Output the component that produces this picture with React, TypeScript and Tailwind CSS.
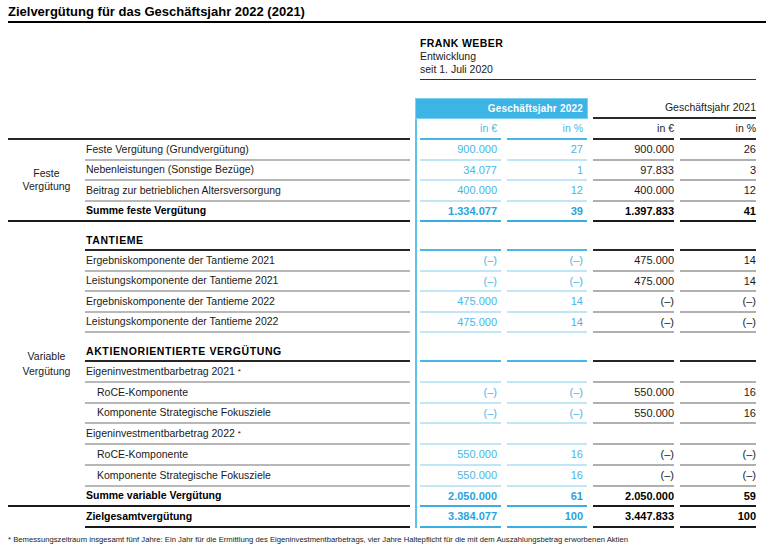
type Kind = "row" | "sub" | "sum" | "head" | "empty";

type Row = {
  label: string;
  kind: Kind;
  h: string;
  vals?: [string, string, string, string];
  star?: boolean;
};

const D = "(–)";

const rows: Row[] = [
  { label: "Feste Vergütung (Grundvergütung)", kind: "row", h: "h-[20.5px]", vals: ["900.000", "27", "900.000", "26"] },
  { label: "Nebenleistungen (Sonstige Bezüge)", kind: "row", h: "h-[20.5px]", vals: ["34.077", "1", "97.833", "3"] },
  { label: "Beitrag zur betrieblichen Altersversorgung", kind: "row", h: "h-[20.5px]", vals: ["400.000", "12", "400.000", "12"] },
  { label: "Summe feste Vergütung", kind: "sum", h: "h-[20.5px]", vals: ["1.334.077", "39", "1.397.833", "41"] },
  { label: "Tantieme", kind: "head", h: "h-[29px]" },
  { label: "Ergebniskomponente der Tantieme 2021", kind: "row", h: "h-[20.5px]", vals: [D, D, "475.000", "14"] },
  { label: "Leistungskomponente der Tantieme 2021", kind: "row", h: "h-[20.5px]", vals: [D, D, "475.000", "14"] },
  { label: "Ergebniskomponente der Tantieme 2022", kind: "row", h: "h-[20.5px]", vals: ["475.000", "14", D, D] },
  { label: "Leistungskomponente der Tantieme 2022", kind: "row", h: "h-[20.5px]", vals: ["475.000", "14", D, D] },
  { label: "Aktienorientierte Vergütung", kind: "head", h: "h-[29px]" },
  { label: "Eigeninvestmentbarbetrag 2021", kind: "empty", h: "h-[20.75px]", star: true },
  { label: "RoCE-Komponente", kind: "sub", h: "h-[20.75px]", vals: [D, D, "550.000", "16"] },
  { label: "Komponente Strategische Fokusziele", kind: "sub", h: "h-[20.75px]", vals: [D, D, "550.000", "16"] },
  { label: "Eigeninvestmentbarbetrag 2022", kind: "empty", h: "h-[20.75px]", star: true },
  { label: "RoCE-Komponente", kind: "sub", h: "h-[20.75px]", vals: ["550.000", "16", D, D] },
  { label: "Komponente Strategische Fokusziele", kind: "sub", h: "h-[20.75px]", vals: ["550.000", "16", D, D] },
  { label: "Summe variable Vergütung", kind: "sum", h: "h-[20.75px]", vals: ["2.050.000", "61", "2.050.000", "59"] },
  { label: "Zielgesamtvergütung", kind: "sum", h: "h-[20.75px]", vals: ["3.384.077", "100", "3.447.833", "100"] },
];

const leftLine: Record<Kind, string> = {
  row: "border-[#b8b8b8]",
  sub: "border-[#b8b8b8]",
  empty: "border-[#b8b8b8]",
  sum: "border-[#1a1a1a]",
  head: "border-[#262626]",
};

const boxLine: Record<Kind, string> = {
  row: "border-[#bfe5f6]",
  sub: "border-[#bfe5f6]",
  empty: "border-[#bfe5f6]",
  sum: "border-[#3aaee0]",
  head: "border-[#4ab6e6]",
};

const rightLine: Record<Kind, string> = {
  row: "border-[#afafaf]",
  sub: "border-[#afafaf]",
  empty: "border-[#afafaf]",
  sum: "border-[#1a1a1a]",
  head: "border-[#262626]",
};

function Label({ r }: { r: Row }) {
  let text = "text-[10.5px] text-[#1a1a1a]";
  if (r.kind === "sum") text = "text-[10.5px] font-bold text-black";
  if (r.kind === "head") text = "text-[10.5px] font-bold uppercase tracking-[0.6px] text-black";
  return (
    <div
      className={`${r.h} flex border-b-2 ${leftLine[r.kind]} ${r.kind === "head" ? "items-end pb-[2px]" : "items-center"} ${r.kind === "sub" ? "pl-[12px]" : "pl-[1px]"}`}
    >
      <span className={`${text} leading-[13px] whitespace-nowrap`}>
        {r.label}
        {r.star && <sup className="ml-[3px] text-[8px] relative -top-[1px]">*</sup>}
      </span>
    </div>
  );
}

function BoxRow({ r }: { r: Row }) {
  const text = r.kind === "sum" ? "font-bold text-[#28a4dc]" : "text-[#48b6e8]";
  return (
    <div className={`${r.h} flex gap-[6px] pl-[3px]`}>
      <div className={`w-[81px] flex items-center justify-end pr-[4px] border-b-2 ${boxLine[r.kind]} text-[11px] ${text}`}>
        {r.vals?.[0]}
      </div>
      <div className={`w-[80px] flex items-center justify-end pr-[4px] border-b-2 ${boxLine[r.kind]} text-[11px] ${text}`}>
        {r.vals?.[1]}
      </div>
    </div>
  );
}

function RightRow({ r }: { r: Row }) {
  const text = r.kind === "sum" ? "font-bold text-black" : "text-[#1a1a1a]";
  return (
    <div className={`${r.h} flex gap-[6px]`}>
      <div className={`w-[81px] flex items-center justify-end border-b-2 ${rightLine[r.kind]} text-[11px] ${text}`}>
        {r.vals?.[2]}
      </div>
      <div className={`w-[76px] flex items-center justify-end border-b-2 ${rightLine[r.kind]} text-[11px] ${text}`}>
        {r.vals?.[3]}
      </div>
    </div>
  );
}

export default function App() {
  const feste = rows.slice(0, 4);
  const variable = rows.slice(4, 17);
  const ziel = rows[17];

  return (
    <div className="w-[766px] h-[549px] bg-white overflow-hidden pl-2 font-['Liberation_Sans',Arial,sans-serif] text-[#1a1a1a]">
      <div className="h-[23px] border-b-2 border-black pt-[4px]">
        <h1 className="text-[13px] leading-[16px] font-bold text-black">
          Zielvergütung für das Geschäftsjahr 2022 (2021)
        </h1>
      </div>

      <div className="ml-[412px] w-[336px] mt-[14px] pb-[3px] border-b border-[#333] text-[10.5px] leading-[13px]">
        <div className="font-bold tracking-[0.4px] text-black">FRANK WEBER</div>
        <div>Entwicklung</div>
        <div>seit 1. Juli 2020</div>
      </div>

      <div className="mt-[18px] flex gap-[5px]">
        {/* labels */}
        <div className="w-[402px] flex flex-col">
          <div className="h-[42px] border-b-2 border-[#262626]" />
          <div className="flex">
            <div className="w-[77px] flex items-center justify-center border-b-2 border-[#1a1a1a] text-[10.5px] leading-[13px] text-center">
              Feste
              <br />
              Vergütung
            </div>
            <div className="flex-1 flex flex-col">
              {feste.map((r, i) => (
                <Label key={i} r={r} />
              ))}
            </div>
          </div>
          <div className="flex">
            <div className="w-[77px] flex items-center justify-center border-b-2 border-[#1a1a1a] text-[10.5px] leading-[15px] text-center">
              Variable
              <br />
              Vergütung
            </div>
            <div className="flex-1 flex flex-col">
              {variable.map((r, i) => (
                <Label key={i} r={r} />
              ))}
            </div>
          </div>
          <div className="flex">
            <div className="w-[77px]" />
            <div className="flex-1">
              <Label r={ziel} />
            </div>
          </div>
        </div>

        {/* Geschäftsjahr 2022 */}
        <div className="w-[173px] flex flex-col">
          <div className="h-[21px] bg-[#3cb4e6] border border-[#7fcff1] flex items-center justify-end pr-[4px] text-[10px] font-bold tracking-[0.2px] text-white">
            Geschäftsjahr 2022
          </div>
          <div className="border-l-2 border-[#5ec2ec]">
            <div className="h-[21px] flex gap-[6px] pl-[3px] text-[10.5px] text-[#48b6e8]">
              <div className="w-[81px] flex items-center justify-end pr-[4px] border-b-2 border-[#47b5e6]">in €</div>
              <div className="w-[80px] flex items-center justify-end pr-[4px] border-b-2 border-[#47b5e6]">in %</div>
            </div>
            {rows.map((r, i) => (
              <BoxRow key={i} r={r} />
            ))}
          </div>
        </div>

        {/* Geschäftsjahr 2021 */}
        <div className="w-[163px] flex flex-col">
          <div className="h-[21px] flex items-center justify-end border-b-2 border-[#2a2a2a] text-[10.5px]">
            Geschäftsjahr 2021
          </div>
          <div className="h-[21px] flex gap-[6px] text-[10.5px]">
            <div className="w-[81px] flex items-center justify-end border-b-2 border-[#262626]">in €</div>
            <div className="w-[76px] flex items-center justify-end border-b-2 border-[#262626]">in %</div>
          </div>
          {rows.map((r, i) => (
            <RightRow key={i} r={r} />
          ))}
        </div>
      </div>

      <p className="mt-[7px] text-[7.7px] leading-[10px] text-[#1a1a1a] whitespace-nowrap">
        * Bemessungszeitraum insgesamt fünf Jahre: Ein Jahr für die Ermittlung des Eigeninvestmentbarbetrags, vier Jahre
        Haltepflicht für die mit dem Auszahlungsbetrag erworbenen Aktien
      </p>
    </div>
  );
}
